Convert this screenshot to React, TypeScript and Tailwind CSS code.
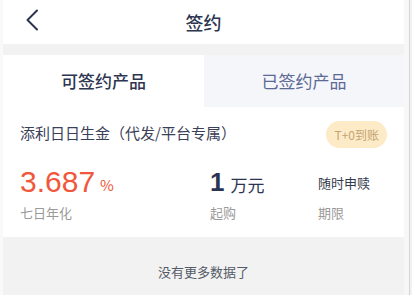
const FONT = { fontFamily: '"Noto Sans CJK SC", "Noto Sans", sans-serif' };

function BackIcon() {
  return (
    <svg width="14" height="22" viewBox="0 0 14 22" fill="none" aria-hidden>
      <path d="M12 1.5 L2.5 11 L12 20.5" stroke="#2b3553" strokeWidth="2" strokeLinecap="round" strokeLinejoin="round" />
    </svg>
  );
}

function Stat({ label, children, className }: { label: string; children: React.ReactNode; className?: string }) {
  return (
    <div className={className}>
      <div className="flex h-[34px] items-end">{children}</div>
      <div className="mt-[4px] text-[13px] leading-[20px] text-[#9a9a9a]">{label}</div>
    </div>
  );
}

export default function App() {
  return (
    <div className="flex h-[295px] w-[412px] overflow-hidden bg-[#f2f2f2]" style={FONT}>
      <div className="w-[3px] shrink-0 bg-[#f9f9f9]" />
      <div className="flex w-[401px] shrink-0 flex-col">
        <header className="relative flex h-[44px] items-center justify-center bg-white">
          <div className="absolute left-[22px] top-[9px]">
            <BackIcon />
          </div>
          <h1 className="text-[18px] font-medium text-[#2c3550]">签约</h1>
        </header>

        <div className="mt-[11px] flex h-[52px]">
          <div className="flex w-[201px] items-center justify-center bg-white text-[17px] font-medium text-[#2d3550]">
            可签约产品
          </div>
          <div className="flex flex-1 items-center justify-center bg-[#f5f6fa] text-[17px] text-[#5b6996]">
            已签约产品
          </div>
        </div>

        <section className="h-[130px] bg-white px-[17px] pt-[11px]">
          <div className="flex items-center justify-between">
            <div className="text-[15px] leading-[24px] text-[#3a4058]">添利日日生金（代发/平台专属）</div>
            <span className="mt-[3px] flex h-[27px] items-center rounded-full bg-[#fdebc7] px-[8px] text-[12px] text-[#c4a472]">
              T+0到账
            </span>
          </div>
          <div className="mt-[17px] flex">
            <Stat label="七日年化" className="w-[190px]">
              <span className="text-[30px] leading-[34px] text-[#f0573b]" style={{ fontFamily: '"Liberation Sans", sans-serif' }}>
                3.687
              </span>
              <span className="mb-[4px] ml-[5px] text-[15px] leading-[20px] text-[#f0573b]">%</span>
            </Stat>
            <Stat label="起购" className="w-[108px]">
              <span className="text-[26px] font-bold leading-[34px] text-[#2b3553]" style={{ fontFamily: '"Liberation Sans", sans-serif' }}>
                1
              </span>
              <span className="mb-[2px] ml-[6px] text-[17px] leading-[24px] text-[#2b3553]">万元</span>
            </Stat>
            <Stat label="期限">
              <span className="mb-[6px] text-[13px] leading-[20px] text-[#333a4d]">随时申赎</span>
            </Stat>
          </div>
        </section>

        <div className="flex flex-1 items-center justify-center pt-[12px] text-[13px] text-[#555a66]">没有更多数据了</div>
      </div>
      <div className="w-[5px] shrink-0 bg-[#f7f7f7]" />
      <div className="w-[1px] shrink-0 bg-[#d4d4d4]" />
      <div className="flex-1 bg-[#f2f2f2]" />
    </div>
  );
}
